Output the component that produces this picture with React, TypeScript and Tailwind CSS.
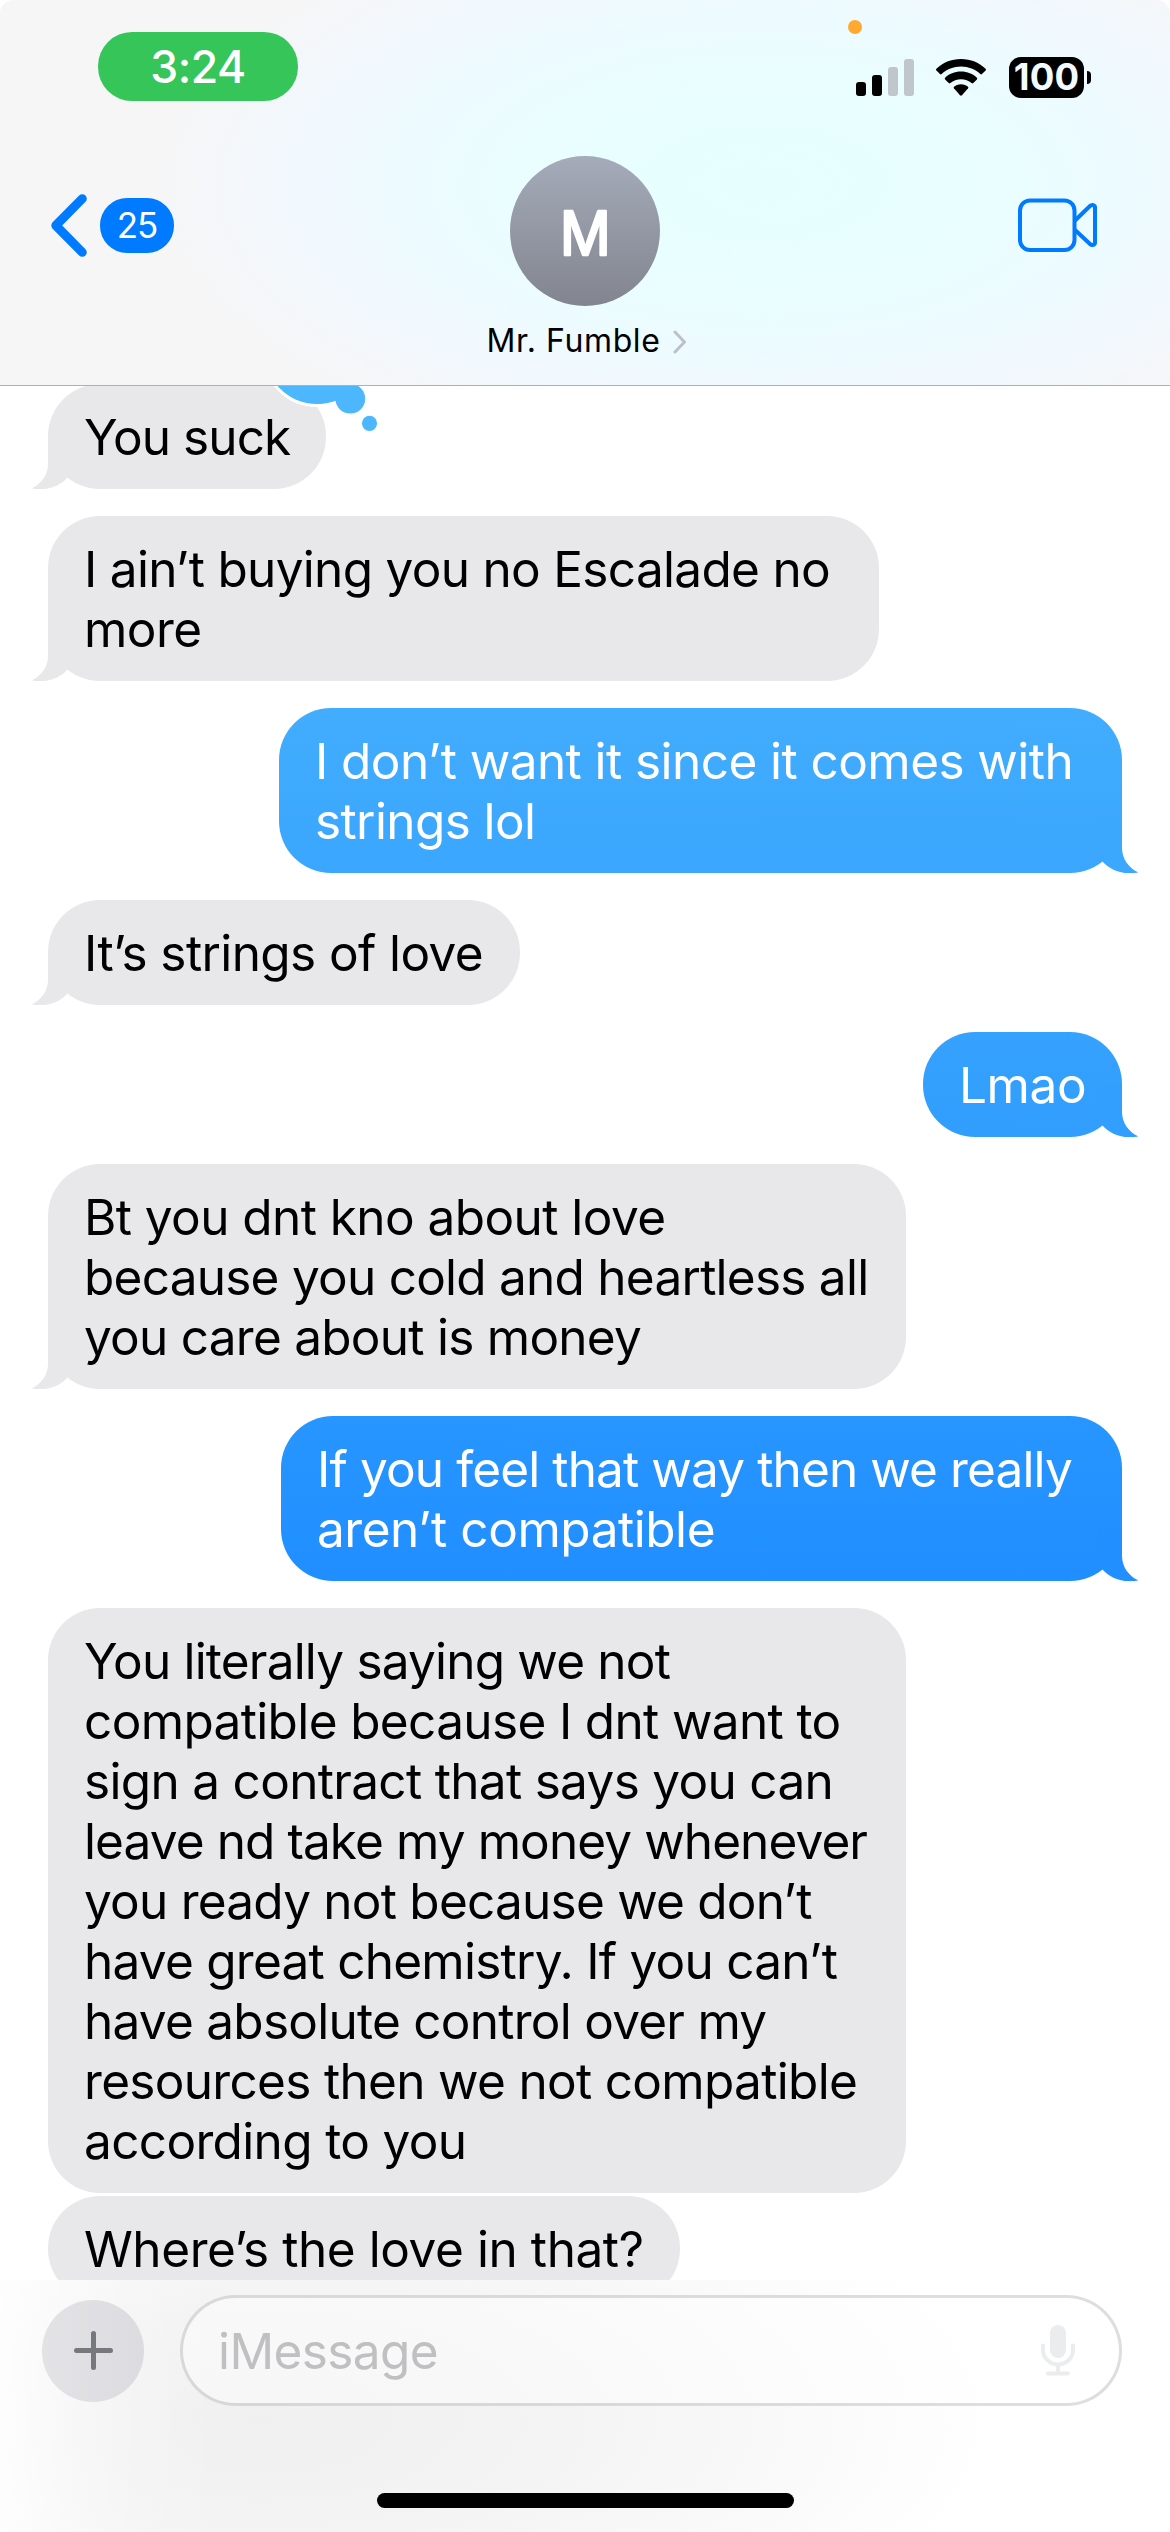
import type { ReactNode } from "react";

type Line = { text: string; tracking: string };

type Message = {
  from: "them" | "me";
  width: string;
  fill: string;
  gap: string;
  tailColor?: string;
  reaction?: boolean;
  lines: Line[];
};

const GRAY = "bg-[#e8e8ea]";
const GRAY_TAIL = "text-[#e8e8ea]";

const messages: Message[] = [
  {
    from: "them",
    width: "w-[278px]",
    fill: GRAY,
    gap: "mt-0",
    tailColor: GRAY_TAIL,
    reaction: true,
    lines: [{ text: "You suck", tracking: "tracking-[-0.9px]" }],
  },
  {
    from: "them",
    width: "w-[831px]",
    fill: GRAY,
    gap: "mt-[27px]",
    tailColor: GRAY_TAIL,
    lines: [
      { text: "I ain’t buying you no Escalade no", tracking: "tracking-[-0.69px]" },
      { text: "more", tracking: "tracking-[-0.5px]" },
    ],
  },
  {
    from: "me",
    width: "w-[843px]",
    fill: "bg-linear-to-b from-[#42adfe] to-[#3aa6fd]",
    gap: "mt-[27px]",
    tailColor: "text-[#3ba7fd]",
    lines: [
      { text: "I don’t want it since it comes with", tracking: "tracking-[-0.56px]" },
      { text: "strings lol", tracking: "tracking-[-0.6px]" },
    ],
  },
  {
    from: "them",
    width: "w-[472px]",
    fill: GRAY,
    gap: "mt-[27px]",
    tailColor: GRAY_TAIL,
    lines: [{ text: "It’s strings of love", tracking: "tracking-[-0.6px]" }],
  },
  {
    from: "me",
    width: "w-[199px]",
    fill: "bg-linear-to-b from-[#36a2fe] to-[#319dfd]",
    gap: "mt-[27px]",
    tailColor: "text-[#329efd]",
    lines: [{ text: "Lmao", tracking: "tracking-[-0.4px]" }],
  },
  {
    from: "them",
    width: "w-[858px]",
    fill: GRAY,
    gap: "mt-[27px]",
    tailColor: GRAY_TAIL,
    lines: [
      { text: "Bt you dnt kno about love", tracking: "tracking-[-0.56px]" },
      { text: "because you cold and heartless all", tracking: "tracking-[-0.75px]" },
      { text: "you care about is money", tracking: "tracking-[-0.74px]" },
    ],
  },
  {
    from: "me",
    width: "w-[841px]",
    fill: "bg-linear-to-b from-[#2796ff] to-[#208eff]",
    gap: "mt-[27px]",
    tailColor: "text-[#218fff]",
    lines: [
      { text: "If you feel that way then we really", tracking: "tracking-[-0.87px]" },
      { text: "aren’t compatible", tracking: "tracking-[-0.45px]" },
    ],
  },
  {
    from: "them",
    width: "w-[858px]",
    fill: GRAY,
    gap: "mt-[27px]",
    lines: [
      { text: "You literally saying we not", tracking: "tracking-[-0.8px]" },
      { text: "compatible because I dnt want to", tracking: "tracking-[-0.64px]" },
      { text: "sign a contract that says you can", tracking: "tracking-[-0.68px]" },
      { text: "leave nd take my money whenever", tracking: "tracking-[-0.9px]" },
      { text: "you ready not because we don’t", tracking: "tracking-[-0.76px]" },
      { text: "have great chemistry. If you can’t", tracking: "tracking-[-0.75px]" },
      { text: "have absolute control over my", tracking: "tracking-[-0.74px]" },
      { text: "resources then we not compatible", tracking: "tracking-[-0.68px]" },
      { text: "according to you", tracking: "tracking-[-0.65px]" },
    ],
  },
  {
    from: "them",
    width: "w-[632px]",
    fill: GRAY,
    gap: "mt-[3px]",
    lines: [{ text: "Where’s the love in that?", tracking: "tracking-[-0.42px]" }],
  },
];

function Tail({ side, color }: { side: "them" | "me"; color: string }) {
  const place = side === "them" ? "-left-4" : "-right-4 -scale-x-100";
  return (
    <svg viewBox="0 0 40 52" className={`absolute bottom-0 h-[52px] w-10 ${place} ${color}`} fill="currentColor">
      <path d="M16 0V27C16 38 9 47 0 51.2C0.5 52 5 52 9 52C20 52 29 47.5 35.6 40.4L40 20V0Z" />
    </svg>
  );
}

function Reaction() {
  return (
    <svg viewBox="0 0 120 112" className="absolute -top-[64px] left-[217px] h-[112px] w-[120px]">
      <circle cx="52" cy="32" r="53.5" fill="#4db7fd" stroke="#fff" strokeWidth="3" />
      <circle cx="85.3" cy="78.7" r="14.9" fill="#4db7fd" />
      <circle cx="104.5" cy="103.3" r="7.6" fill="#4db7fd" />
      <path d="M52 83.8A52 52 0 0 0 71.5 80L80 66H52Z" fill="#4db7fd" />
    </svg>
  );
}

function Bubble({ message }: { message: Message }) {
  const mine = message.from === "me";
  return (
    <div className={`flex shrink-0 px-12 ${mine ? "justify-end" : "justify-start"} ${message.gap}`}>
      <div
        className={`relative rounded-[52px] pt-[23px] pb-[22px] pl-9 ${message.width} ${message.fill} ${
          mine ? "text-white" : "text-black"
        }`}
      >
        {message.tailColor && <Tail side={message.from} color={message.tailColor} />}
        {message.lines.map((line) => (
          <p key={line.text} className={`relative h-[60px] text-[49.5px] leading-[60px] whitespace-nowrap ${line.tracking}`}>
            {line.text}
          </p>
        ))}
        {message.reaction && <Reaction />}
      </div>
    </div>
  );
}

function StatusBar() {
  return (
    <div className="relative flex h-[101px] items-end justify-between pr-[79px] pl-[98px]">
      <div className="flex h-[69px] w-[200px] items-center justify-center rounded-[34px] bg-[#35c558] pt-[2px] text-[44.5px] leading-none font-medium tracking-[-0.5px] text-white">
        <span>3:24</span>
      </div>
      <span className="absolute top-5 left-[848px] size-[14px] rounded-full bg-[#ffa931]" />
      <div className="mb-[3px] flex h-[41px] items-start">
        <div className="mt-[2px] flex h-[37px] items-end gap-[6px]">
          <span className="h-[14px] w-[10px] rounded-[3px] bg-black" />
          <span className="h-[21px] w-[10px] rounded-[3px] bg-black" />
          <span className="h-[29px] w-[10px] rounded-[3px] bg-[#c0c7cc]" />
          <span className="h-[37px] w-[10px] rounded-[3px] bg-[#c0c7cc]" />
        </div>
        <svg viewBox="0 0 50 37" className="mt-[2px] ml-[22px] h-[37px] w-[50px]">
          <path d="M25 0C34.7 0 43.5 3.7 49.6 9.8C50.1 10.3 50.1 11 49.6 11.5L46 15.1C45.5 15.6 44.8 15.6 44.3 15.1C39.3 10.4 32.5 7.6 25 7.6C17.5 7.6 10.7 10.4 5.7 15.1C5.2 15.6 4.5 15.6 4 15.1L.4 11.5C-.1 11 -.1 10.3 .4 9.8C6.5 3.7 15.3 0 25 0Z" />
          <path d="M25 12.6C31.4 12.6 36.9 14.9 40.9 18.7C41.4 19.2 41.4 19.9 40.9 20.4L37.3 24C36.8 24.5 36.1 24.5 35.6 24.1C32.7 21.6 29.1 20.2 25 20.2C20.9 20.2 17.3 21.6 14.4 24.1C13.9 24.5 13.2 24.5 12.7 24L9.1 20.4C8.6 19.9 8.6 19.2 9.1 18.7C13.1 14.9 18.6 12.6 25 12.6Z" />
          <path d="M25 25.2C27.8 25.2 30.3 26.1 32 27.7C32.5 28.2 32.5 28.8 32.1 29.3L26 36.3C25.4 36.9 24.6 36.9 24 36.3L17.9 29.3C17.5 28.8 17.5 28.2 18 27.7C19.7 26.1 22.2 25.2 25 25.2Z" />
        </svg>
        <div className="ml-[23px] flex h-[41px] w-[75px] items-center justify-center rounded-[12px] bg-black text-[36.5px] leading-none font-bold tracking-[0.2px] text-[#f3fbff]">
          100
        </div>
        <span className="mt-[14px] ml-[3px] h-[13px] w-1 rounded-r-full bg-black" />
      </div>
    </div>
  );
}

function Avatar({ children }: { children: ReactNode }) {
  return (
    <div className="size-[150px] rounded-full bg-linear-to-b from-[#a5abb9] to-[#82858f]">
      <svg viewBox="0 0 150 150" className="size-full">
        <text
          x="0"
          y="99.5"
          transform="translate(75.3 0) scale(0.92 1)"
          textAnchor="middle"
          fontFamily="Inter, sans-serif"
          fontSize="61"
          fontWeight="400"
          fill="#fff"
          stroke="#fff"
          strokeWidth="2.6"
          strokeLinejoin="round"
        >
          {children}
        </text>
      </svg>
    </div>
  );
}

function Header() {
  return (
    <header className="h-[386px] shrink-0 rounded-t-[14px] border-b border-[#adb0b2] bg-[#f6f6f6] bg-[radial-gradient(ellipse_600px_280px_at_765px_185px,#e6fffe_0%,#e9feff_35%,#edfbff_60%,#f1f8fe_78%,#f6f6f7_100%)]">
      <StatusBar />
      <div className="flex justify-between pr-[73px] pl-[50px]">
        <div className="mt-[93px] flex h-[63px] w-[147px] items-center gap-[13px]">
          <svg viewBox="0 0 37 63" className="h-[63px] w-[37px]" fill="none" stroke="#007aff" strokeWidth="9" strokeLinecap="round" strokeLinejoin="round">
            <path d="M32.3 4.7L5.8 31.5L32.3 58.3" />
          </svg>
          <span className="flex h-[55px] w-[74px] items-center justify-center rounded-[27px] bg-[#007aff] text-[35px] leading-none tracking-[-1px] text-white">
            25
          </span>
        </div>
        <div className="mt-[55px] flex w-[220px] flex-col items-center">
          <Avatar>M</Avatar>
          <div className="mt-[14px] -mr-[4px] flex items-center">
            <span className="text-[32px] leading-[42px] tracking-[0.6px] whitespace-nowrap text-black">Mr. Fumble</span>
            <svg viewBox="0 0 14 24" className="mt-[2px] ml-[13px] h-6 w-[14px]" fill="none" stroke="#bcc1c6" strokeWidth="3" strokeLinecap="round" strokeLinejoin="round">
              <path d="M2 2L11.5 12L2 22" />
            </svg>
          </div>
        </div>
        <div className="mt-[96px] flex w-[124px] justify-end">
          <svg viewBox="0 0 80 56" className="h-14 w-20" fill="none" stroke="#007aff" strokeWidth="4" strokeLinejoin="round">
            <rect x="3" y="3.5" width="54.5" height="49.5" rx="10" />
            <path d="M57.5 24L73 9C75 7 78 8 78 10.5V45.500C78 48 75 49 73 47L57.5 32.500" />
          </svg>
        </div>
      </div>
    </header>
  );
}

function Composer() {
  return (
    <footer className="flex h-[252px] shrink-0 flex-col items-center bg-white bg-[linear-gradient(to_right,rgba(255,255,255,0.85)_0px,rgba(255,255,255,0.5)_60px,rgba(255,255,255,0.2)_130px,rgba(255,255,255,0)_220px),radial-gradient(ellipse_740px_300px_at_260px_140px,#f0f0f1_0%,#f3f3f4_35%,#f8f8f9_65%,#fff_100%)]">
      <div className="mt-[15px] flex w-full items-center justify-between pr-12 pl-[42px]">
        <button className="flex size-[102px] items-center justify-center rounded-full bg-linear-to-r from-[#e3e3e6] to-[#dcdce0]">
          <svg viewBox="0 0 39 39" className="size-[39px]" stroke="#77787d" strokeWidth="5" strokeLinecap="round">
            <path d="M19.5 2.5V36.5M2.5 19.5H36.5" />
          </svg>
        </button>
        <div className="flex h-[111px] w-[942px] items-center justify-between rounded-[56px] border-[3px] border-black/13 bg-white/45 pr-[44px] pl-[35px]">
          <span className="text-[49.5px] leading-[60px] tracking-[-0.6px] text-[#c0c0c2]">iMessage</span>
          <svg viewBox="0 0 34 51" className="h-[51px] w-[34px]" fill="none" stroke="#ebecee" strokeWidth="4" strokeLinecap="round">
            <rect x="9" y="0" width="16" height="33" rx="8" fill="#ebecee" stroke="none" />
            <path d="M2 20.5V25A15 14.5 0 0 0 32 25V20.5M17 40V48M7 48.5H27" />
          </svg>
        </div>
      </div>
      <div className="mt-[87px] h-[15px] w-[417px] rounded-full bg-black" />
    </footer>
  );
}

export default function App() {
  return (
    <div className="flex h-[2532px] w-[1170px] flex-col overflow-hidden bg-white font-['Inter',sans-serif] antialiased">
      <Header />
      <main className="flex h-[1894px] shrink-0 flex-col overflow-hidden bg-white">
        <div className="-mt-[2px] flex flex-col">
          {messages.map((message) => (
            <Bubble key={message.lines[0].text} message={message} />
          ))}
        </div>
      </main>
      <Composer />
    </div>
  );
}
